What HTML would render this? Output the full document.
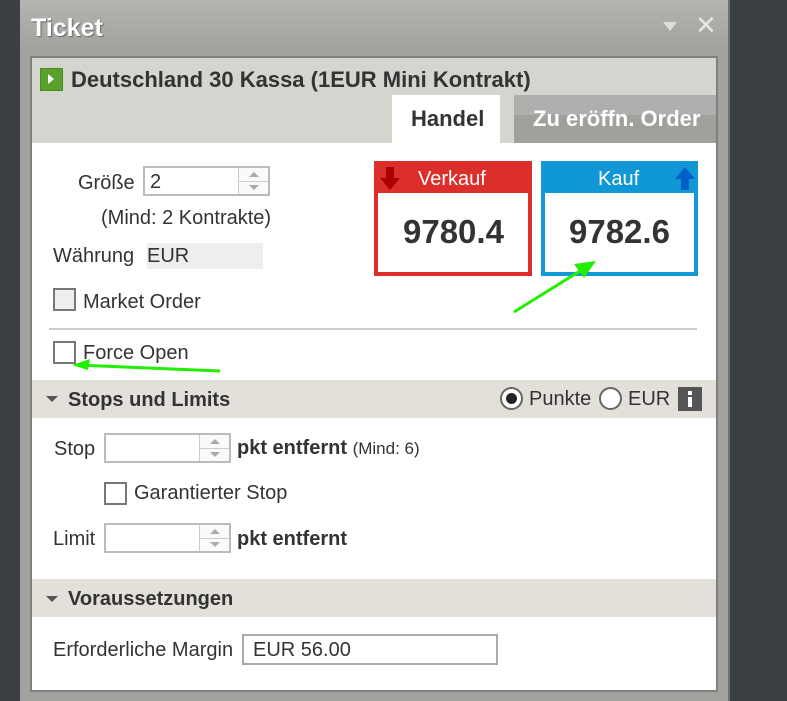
<!DOCTYPE html>
<html><head><meta charset="utf-8"><style>
*{margin:0;padding:0;box-sizing:border-box}
body{width:787px;height:701px;background:#3a4043;position:relative;overflow:hidden;font-family:"Liberation Sans",Arial,sans-serif;color:#333}
.a{position:absolute}
.t{font-size:20px;white-space:nowrap;line-height:23px;margin-top:2px}
.h{margin-top:0}
.b{font-weight:bold}
.cb{position:absolute;width:23px;height:23px;border:2px solid #777;background:#fff}
.spin{position:absolute;border:2px solid #bbb;background:#fff}
.sp{position:absolute;right:0;top:0;width:30px;height:100%;border-left:1px solid #ccc;background:#fafafa}
.sp:after{content:"";position:absolute;left:0;right:0;top:50%;border-top:1px solid #ccc}
.up{position:absolute;left:10px;top:4px;border:5px solid transparent;border-bottom:5px solid #aaa;border-top:0}
.dn{position:absolute;left:10px;bottom:4px;border:5px solid transparent;border-top:5px solid #aaa;border-bottom:0}
</style></head><body>
<div class="a" style="left:20px;top:0;width:708px;height:701px;background:linear-gradient(#b4b5b1 0,#a1a29e 50px,#a1a29e)"></div>
<div class="a" style="left:728px;top:0;width:2px;height:701px;background:#6e7372"></div>
<div class="a t b h" style="left:31px;top:15px;font-size:25px;line-height:26px;color:#fff;text-shadow:1px 1px 1px #666">Ticket</div>
<div class="a" style="left:663px;top:22px;border:7px solid transparent;border-top:9px solid #ddd;border-bottom:0"></div>
<div class="a" style="left:695px;top:10px;font-size:26px;color:#e4e4e4">✕</div>
<div class="a" style="left:30px;top:56px;width:688px;height:636px;border:2px solid #808080;background:#fff"></div>
<div class="a" style="left:32px;top:58px;width:684px;height:85px;background:#d4d5cf"></div>
<div class="a" style="left:40px;top:68px;width:23px;height:23px;background:#5aa02c;border:1px solid #4a8a22"></div>
<div class="a" style="left:48px;top:74px;border:5px solid transparent;border-left:6px solid #fff;border-right:0"></div>
<div class="a t b h" style="left:71px;top:67px;font-size:22px;line-height:25px">Deutschland 30 Kassa (1EUR Mini Kontrakt)</div>
<div class="a" style="left:392px;top:95px;width:108px;height:48px;background:#fff"></div>
<div class="a t b h" style="left:411px;top:106px;font-size:22px;line-height:25px">Handel</div>
<div class="a" style="left:514px;top:95px;width:202px;height:48px;background:linear-gradient(#afb0ad 0,#afb0ad 20px,#a0a19d 20px)"></div>
<div class="a t b h" style="left:533px;top:106px;font-size:22px;line-height:25px;color:#fff">Zu eröffn. Order</div>

<div class="a t" style="left:78px;top:170px">Größe</div>
<div class="spin" style="left:143px;top:166px;width:127px;height:30px"><div class="a t" style="left:5px;top:1px">2</div><div class="sp"><div class="up"></div><div class="dn"></div></div></div>
<div class="a t" style="left:101px;top:205px">(Mind: 2 Kontrakte)</div>
<div class="a t" style="left:53px;top:243px">Währung</div>
<div class="a" style="left:147px;top:243px;width:116px;height:26px;background:#eee"></div>
<div class="a t" style="left:147px;top:243px">EUR</div>
<div class="cb" style="left:53px;top:288px;background:#eee"></div>
<div class="a t" style="left:83px;top:289px">Market Order</div>
<div class="a" style="left:49px;top:328px;width:648px;height:2px;background:#ccc"></div>
<div class="cb" style="left:53px;top:341px"></div>
<div class="a t" style="left:83px;top:340px">Force Open</div>
<svg class="a" style="left:70px;top:355px" width="160" height="20"><path d="M6 10 L150 16" stroke="#22ee00" stroke-width="3"/><path d="M2 10 L20 4 L18 15Z" fill="#22ee00"/></svg>

<div class="a" style="left:374px;top:161px;width:158px;height:115px;background:#dc2e2a"></div>
<div class="a" style="left:378px;top:193px;width:150px;height:79px;background:#fff"></div>
<div class="a t" style="left:418px;top:166px;color:#fff">Verkauf</div>
<svg class="a" style="left:380px;top:167px" width="20" height="24"><path d="M6 0h8v11h6L10 23 0 11h6z" fill="#a00"/></svg>
<div class="a t b h" style="left:403px;top:213px;font-size:33px;line-height:38px">9780.4</div>
<div class="a" style="left:541px;top:161px;width:157px;height:115px;background:#0f97d6"></div>
<div class="a" style="left:545px;top:193px;width:149px;height:79px;background:#fff"></div>
<div class="a t" style="left:598px;top:166px;color:#fff">Kauf</div>
<svg class="a" style="left:675px;top:167px" width="20" height="24"><path d="M10 0l10 12h-6v11H6V12H0z" fill="#0060c8"/></svg>
<div class="a t b h" style="left:569px;top:213px;font-size:33px;line-height:38px">9782.6</div>
<svg class="a" style="left:510px;top:258px" width="90" height="58"><path d="M4 54 L78 8" stroke="#22ee00" stroke-width="3"/><path d="M86 3 L64 6 L74 20Z" fill="#22ee00"/></svg>

<div class="a" style="left:32px;top:380px;width:684px;height:38px;background:#e2e0d9"></div>
<div class="a" style="left:46px;top:396px;border:6px solid transparent;border-top:6px solid #555;border-bottom:0"></div>
<div class="a t b" style="left:68px;top:387px">Stops und Limits</div>
<div class="a" style="left:500px;top:387px;width:23px;height:23px;border:2px solid #666;border-radius:50%;background:#fff"></div>
<div class="a" style="left:506px;top:393px;width:11px;height:11px;border-radius:50%;background:#222"></div>
<div class="a t" style="left:529px;top:386px">Punkte</div>
<div class="a" style="left:599px;top:387px;width:23px;height:23px;border:2px solid #666;border-radius:50%;background:#fff"></div>
<div class="a t" style="left:628px;top:386px">EUR</div>
<div class="a" style="left:678px;top:387px;width:24px;height:24px;background:#555"></div>
<div class="a" style="left:688px;top:391px;width:4px;height:4px;background:#fff"></div>
<div class="a" style="left:688px;top:397px;width:4px;height:10px;background:#fff"></div>

<div class="a t" style="left:54px;top:436px">Stop</div>
<div class="spin" style="left:104px;top:433px;width:127px;height:30px"><div class="sp"><div class="up"></div><div class="dn"></div></div></div>
<div class="a t" style="left:237px;top:435px"><b>pkt entfernt</b> <span style="font-size:17px">(Mind: 6)</span></div>
<div class="cb" style="left:104px;top:482px"></div>
<div class="a t" style="left:134px;top:480px">Garantierter Stop</div>
<div class="a t" style="left:53px;top:526px">Limit</div>
<div class="spin" style="left:104px;top:523px;width:127px;height:30px"><div class="sp"><div class="up"></div><div class="dn"></div></div></div>
<div class="a t b" style="left:237px;top:526px">pkt entfernt</div>

<div class="a" style="left:32px;top:579px;width:684px;height:38px;background:#e2e0d9"></div>
<div class="a" style="left:46px;top:596px;border:6px solid transparent;border-top:6px solid #555;border-bottom:0"></div>
<div class="a t b" style="left:68px;top:586px">Voraussetzungen</div>
<div class="a t" style="left:53px;top:637px">Erforderliche Margin</div>
<div class="a" style="left:242px;top:634px;width:256px;height:31px;border:2px solid #aaa;background:#fff"></div>
<div class="a t" style="left:253px;top:637px">EUR 56.00</div>
</body></html>
